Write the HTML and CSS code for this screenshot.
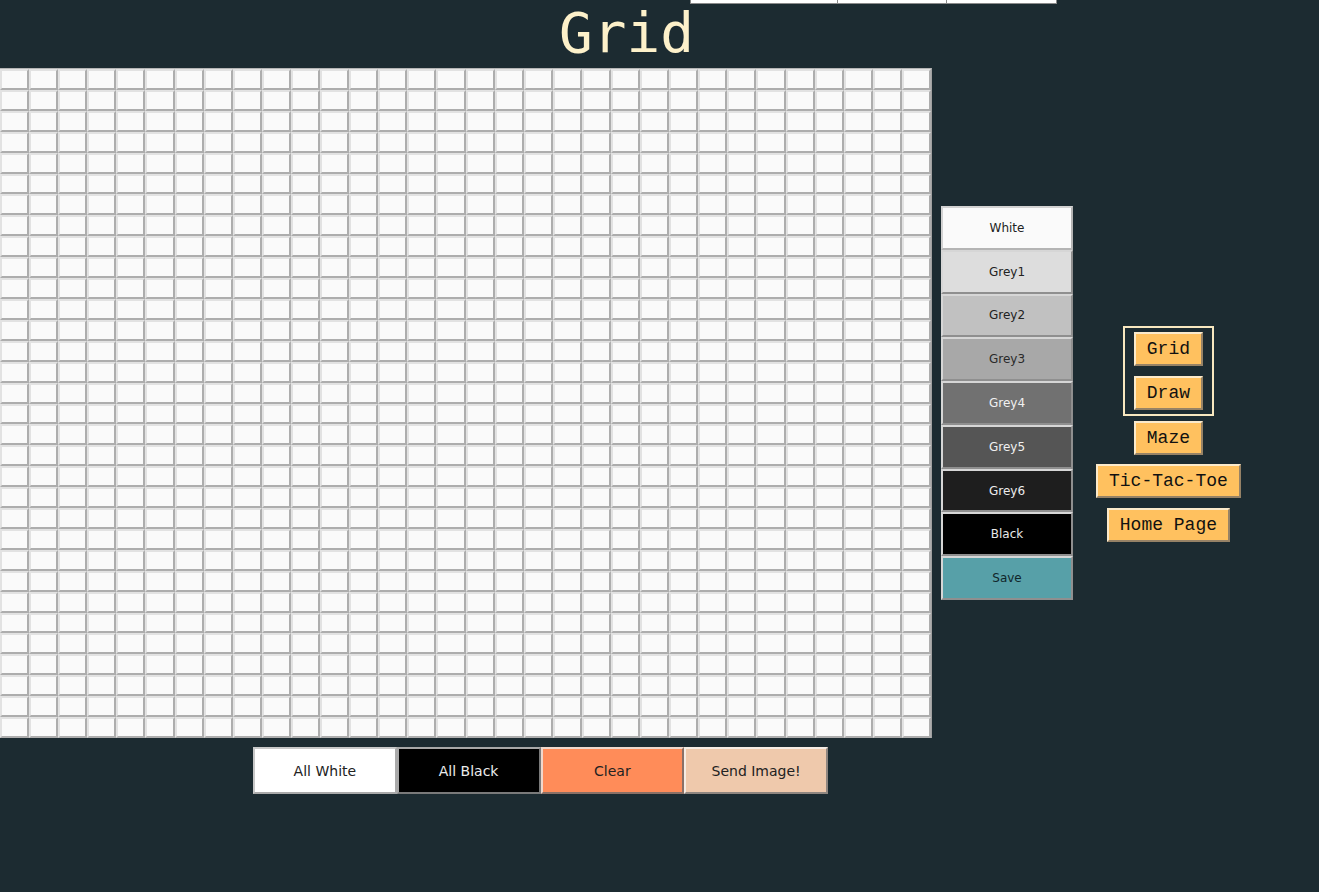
FILE: index.html
```html
<!DOCTYPE html>
<html lang="en">
<head>
<meta charset="utf-8">
<title>Grid</title>
<link rel="stylesheet" href="styles.css">
</head>
<body>
<div class="topbar">
  <div class="topbar-cell wide"></div>
  <div class="topbar-cell"></div>
  <div class="topbar-cell"></div>
</div>
<header class="header">
  <h1 class="title">Grid</h1>
</header>
<main class="main">
  <section class="workspace">
    <div class="board-row">
      <div class="grid" id="grid"></div>
      <div class="tools">
        <button class="tool tool-white">White</button>
        <button class="tool tool-grey1">Grey1</button>
        <button class="tool tool-grey2">Grey2</button>
        <button class="tool tool-grey3">Grey3</button>
        <button class="tool tool-grey4">Grey4</button>
        <button class="tool tool-grey5">Grey5</button>
        <button class="tool tool-grey6">Grey6</button>
        <button class="tool tool-black">Black</button>
        <button class="tool tool-save">Save</button>
      </div>
    </div>
    <div class="actions">
      <button class="action action-white">All White</button>
      <button class="action action-black">All Black</button>
      <button class="action action-clear">Clear</button>
      <button class="action action-send">Send Image!</button>
    </div>
  </section>
  <nav class="nav">
    <div class="nav-group">
      <button class="nav-btn">Grid</button>
      <button class="nav-btn">Draw</button>
    </div>
    <button class="nav-btn">Maze</button>
    <button class="nav-btn">Tic-Tac-Toe</button>
    <button class="nav-btn">Home Page</button>
  </nav>
</main>
<script src="script.js"></script>
</body>
</html>
```
FILE: styles.css
```css
* { box-sizing: border-box; }

body {
  margin: 0;
  background: #1c2b31;
  font-family: "DejaVu Sans", sans-serif;
  position: relative;
  min-height: 892px;
}

.topbar {
  position: absolute;
  top: -20px;
  left: 690px;
  width: 367px;
  height: 24px;
  display: flex;
  background: #ffffff;
  border: 1px solid #8a8a8a;
}
.topbar-cell {
  width: 110px;
  border-left: 1px solid #8a8a8a;
}
.topbar-cell.wide {
  width: 146px;
  border-left: none;
}

.header {
  height: 68px;
}
.title {
  margin: 0;
  padding-left: 559px;
  font-family: "DejaVu Sans Mono", monospace;
  font-weight: normal;
  font-size: 56px;
  line-height: 65px;
  color: #fdf1ca;
}

.main {
  display: flex;
  align-items: center;
  gap: 23px;
}

.workspace {
  display: flex;
  flex-direction: column;
  align-items: center;
}

.board-row {
  display: flex;
  align-items: center;
  gap: 9px;
}

.grid {
  width: 932px;
  height: 670px;
  display: grid;
  grid-template-columns: repeat(32, 1fr);
  grid-template-rows: repeat(32, 1fr);
  border-top: 1px solid #b5b5b5;
  border-right: 1px solid #a0a0a0;
  background: #d8d8d8;
}
.cell {
  background: #fafafa;
  border-style: solid;
  border-width: 2px;
  border-color: #e2e2e2 #adadad #adadad #e2e2e2;
}

.tools {
  width: 132px;
  height: 394px;
  display: flex;
  flex-direction: column;
}
.tool {
  flex: 1;
  margin: 0;
  padding: 0;
  font-family: "DejaVu Sans", sans-serif;
  font-size: 12px;
  border-style: solid;
  border-width: 2px;
  border-color: #d6d6d6 #8f8f8f #8f8f8f #d6d6d6;
  color: #222;
}
.tool-white { background: #fafafa; border-color: #d2d2d2 #b4b4b4 #b4b4b4 #d2d2d2; }
.tool-grey1 { background: #dddddd; }
.tool-grey2 { background: #c1c1c1; }
.tool-grey3 { background: #a8a8a8; color: #2a2a2a; }
.tool-grey4 { background: #717171; color: #f0f0f0; }
.tool-grey5 { background: #555555; color: #f0f0f0; }
.tool-grey6 { background: #1e1e1e; color: #ececec; }
.tool-black { background: #000000; color: #e8e8e8; }
.tool-save  { background: #57a0a8; color: #10262a; }

.actions {
  margin-top: 9px;
  margin-left: 8px;
  display: flex;
}
.action {
  width: 143.75px;
  height: 47px;
  margin: 0;
  padding: 0;
  font-family: "DejaVu Sans", sans-serif;
  font-size: 14px;
  border-style: solid;
  border-width: 2px;
  border-color: #d9d9d9 #8e8e8e #8e8e8e #d9d9d9;
  color: #222;
}
.action-white { background: #ffffff; border-color: #c8c8c8 #aaaaaa #aaaaaa #c8c8c8; }
.action-black { background: #000000; color: #ececec; border-color: #a8a8a8 #7a7a7a #7a7a7a #a8a8a8; }
.action-clear { background: #ff8c59; border-color: #f0d8cc #8a7066 #8a7066 #f0d8cc; }
.action-send  { background: #efc9ac; border-color: #f5ece4 #8f8680 #8f8680 #f5ece4; }

.nav {
  display: flex;
  flex-direction: column;
  align-items: center;
  padding-top: 10px;
}
.nav-group {
  display: flex;
  flex-direction: column;
  align-items: center;
  border: 2px solid #f7e7bf;
  padding: 0 9px;
}
.nav-btn {
  margin: 4.7px 0;
  padding: 5px 11px;
  background: #ffc15f;
  font-family: "Liberation Mono", monospace;
  font-size: 18px;
  line-height: 20px;
  color: #111;
  border-style: solid;
  border-width: 2px;
  border-color: #fbeacb #968266 #968266 #fbeacb;
}
```
FILE: script.js
```js
var grid = document.getElementById('grid');
for (var i = 0; i < 32 * 32; i++) {
  var c = document.createElement('div');
  c.className = 'cell';
  grid.appendChild(c);
}
```
